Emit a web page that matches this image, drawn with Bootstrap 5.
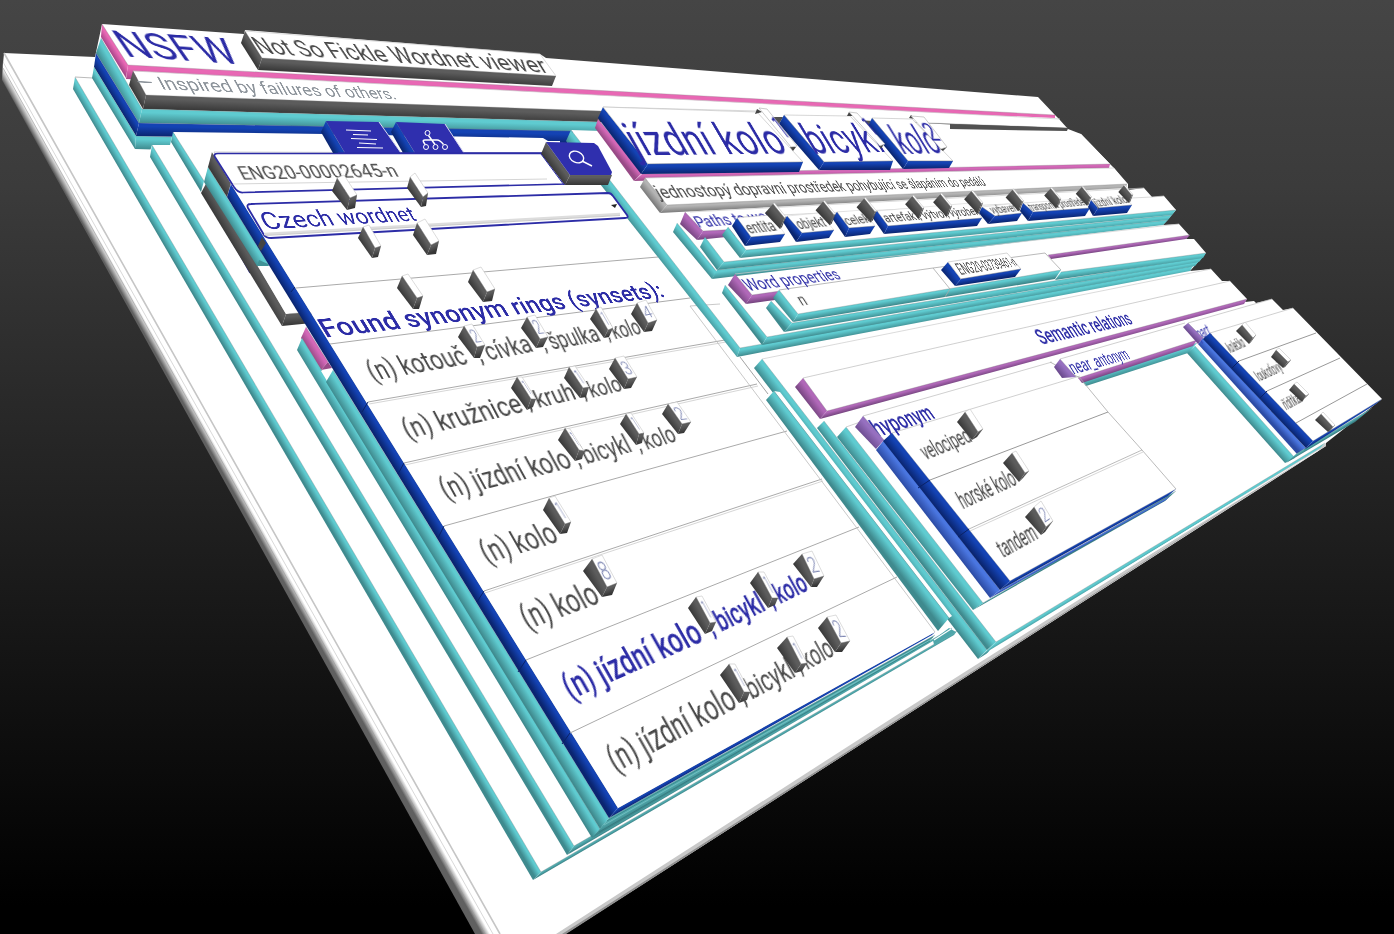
<!DOCTYPE html>
<html lang="cs">
<head>
<meta charset="utf-8">
<meta name="viewport" content="width=device-width, initial-scale=1">
<title>NSFW – Not So Fickle Wordnet viewer</title>
<link href="https://cdn.jsdelivr.net/npm/bootstrap@5.3.0/dist/css/bootstrap.min.css" rel="stylesheet">
<style>
  body { background: #000; font-family: Roboto, "Noto Sans", sans-serif; }
  .scene { width: 1394px; height: 934px; background: linear-gradient(#454545 0%, #3b3b3b 20%, #202020 55%, #000 97%); }
  .scene svg { left: 0; top: 0; width: 1394px; height: 934px; }
  .label3d { left: 0; top: 0; line-height: 1; white-space: pre; transform-origin: 0 0; color: #484848; font-weight: 400; }
  .ink { color: #2c2ca6; font-weight: 400; }
  .ink-bold { color: #2c2ca6; font-weight: 500; }
  .ink-thin { color: #2c2ca6; font-weight: 400; }
  .muted-ink { color: #8d949b; }
  .digit { color: #8089b4; font-weight: 300; }
</style>
</head>
<body class="m-0 overflow-hidden">
<main class="scene position-relative overflow-hidden" id="scene"></main>
<script src="https://cdn.jsdelivr.net/npm/bootstrap@5.3.0/dist/js/bootstrap.bundle.min.js"></script>
<script>
const scene = document.getElementById('scene');
const NS = 'http://www.w3.org/2000/svg';
// wall shades: lit upper rim, shadowed foot
const shade = {
  teal: ['#5fcbd0', '#3f8a8e'], deep: ['#53aeb2', '#3a8084'], blue: ['#1443b4', '#0a2570'], dark: ['#5c5c5c', '#363636'],
  pink: ['#e868b4', '#a9468a'], rose: ['#d468b8', '#984a86'], purple: ['#b068b8', '#74447e'],
  violet: ['#9670c0', '#6d4c90'], grey: ['#b4b4b4', '#7c7c7c'], sky: ['#4a76e0', '#2c4ba4'],
  page: ['#ffffff', '#606060']
};
let markup = '', ids = 0;
function poly(fill, pts, extra = '') { markup += `<polygon fill="${fill}" points="${pts}" ${extra}/>`; }
function line(pts, color = '#bbb', w = 1) { markup += `<polyline points="${pts}" fill="none" stroke="${color}" stroke-width="${w}"/>`; }
// a,b = upper rim; c,d = foot
function wall(kind, ax, ay, bx, by, cx, cy, dx, dy) {
  const [l, d] = shade[kind], ex = bx - ax, ey = by - ay, n = ex * ex + ey * ey || 1;
  const k = ((dx - ax) * -ey + (dy - ay) * ex) / n, id = 'g' + (++ids);
  markup += `<linearGradient id="${id}" gradientUnits="userSpaceOnUse" x1="${ax}" y1="${ay}" x2="${ax - ey * k}" y2="${ay + ex * k}"><stop offset=".25" stop-color="${l}"/><stop offset="1" stop-color="${d}"/></linearGradient>`;
  poly(`url(#${id})`, [ax, ay, bx, by, cx, cy, dx, dy].join(' '));
  line(`${ax},${ay} ${bx},${by}`, 'rgba(130,130,130,.45)', .7);
}
function flush() {
  const s = document.createElementNS(NS, 'svg');
  s.setAttribute('class', 'position-absolute');
  s.setAttribute('viewBox', '0 0 1394 934');
  s.innerHTML = markup; scene.appendChild(s); markup = '';
}
function solve(A, b) {
  for (let i = 0; i < 8; i++) {
    let p = i; for (let r = i; r < 8; r++) if (Math.abs(A[r][i]) > Math.abs(A[p][i])) p = r;
    [A[i], A[p]] = [A[p], A[i]]; [b[i], b[p]] = [b[p], b[i]];
    for (let r = 0; r < 8; r++) if (r !== i) {
      const f = A[r][i] / A[i][i];
      for (let c = i; c < 8; c++) A[r][c] -= f * A[i][c];
      b[r] -= f * b[i];
    }
  }
  return b.map((v, i) => v / A[i][i]);
}
// baseline start/end and the vectors from the baseline up to the cap height
function text(str, cls, x0, y0, x1, y1, ux, uy, vx = ux, vy = uy) {
  const e = document.createElement('div'), f = Math.max(12, Math.round(-uy / .711 * 1.15));
  e.className = 'label3d position-absolute ' + cls; e.textContent = str; e.style.fontSize = f + 'px';
  scene.appendChild(e);
  const w = e.getBoundingClientRect().width, base = f * .841, cap = f * .13;
  const src = [[0, cap], [w, cap], [w, base], [0, base]];
  const dst = [[x0 + ux, y0 + uy], [x1 + vx, y1 + vy], [x1, y1], [x0, y0]], A = [], b = [];
  src.forEach(([x, y], i) => {
    const [X, Y] = dst[i];
    A.push([x, y, 1, 0, 0, 0, -x * X, -y * X]); b.push(X);
    A.push([0, 0, 0, x, y, 1, -x * Y, -y * Y]); b.push(Y);
  });
  const h = solve(A, b);
  e.style.transform = `matrix3d(${[h[0], h[3], 0, h[6], h[1], h[4], 0, h[7], 0, 0, 1, 0, h[2], h[5], 0, 1].map(v => v.toFixed(9)).join()})`;
}
// sup block: top, left, bottom, inner corner, right corner, right foot
const digits = [];
function cube(n, tx, ty, lx, ly, bx, by, ix, iy, rx, ry, fx, fy) {
  const qx = rx + tx - ix, qy = ry + ty - iy;
  poly('#fff', [tx, ty, qx, qy, rx, ry, ix, iy].join(' '), 'stroke="#c4c4c4" stroke-width=".6"');
  wall('dark', tx, ty, ix, iy, bx, by, lx, ly);
  wall('dark', ix, iy, rx, ry, fx, fy, bx, by);
  if (n) digits.push([n, tx + (ix - tx) * .78 + 1, ty + (iy - ty) * .78, tx + (rx - tx) * .86, ty + (ry - ty) * .82, (tx - ix) * .6, (ty - iy) * .6]);
}

/* ---- page plane and stepped right silhouette ---- */
poly('#fff', '4,53 95,57 102,24 244,34 245,30 540,54 546,58 660,67 900,86 1038,97 1055,115 1059,119 1068,129 1081,134 1110,164 1114,168 1128,184 1128,190 1144,188 1152,197 1164,196 1176,210 1163,225 1179,224 1189,235 1186,239 1194,239 1206,253 1190,271 1211,269 1222,281 1230,281 1247,299 1245,302 1254,301 1256,303 1272,299 1283,310 1293,308 1382,399 1326,443 1326,446 565,934 500,934');
poly('#fff', '4,53 500,934 488,934 3,64');
wall('page', 3, 62, 493, 934, 475, 934, 2, 80);
line('4,53 500,934', '#c6c6c6', 1.6); line('3,68 485,934', '#999', .6);
poly('#c9c9c9', '1326,443 1326,446 565,934 556,934 900,713');
poly('#8f8f8f', '1326,445 566,934 562,934');
/* main container */
wall('teal', 75, 77, 541, 872, 533, 880, 73, 89);
wall('deep', 541, 872, 957, 631, 954, 635, 533, 880);
line('75,77 93,78');
/* header stack */
wall('pink', 102, 24, 128, 65, 126, 78, 101, 37);
wall('teal', 101, 38, 142, 109, 139, 123, 96, 53);
wall('blue', 96, 53, 139, 123, 136, 136, 94, 67);
wall('teal', 94, 67, 136, 136, 135, 149, 92, 78);
wall('teal', 136, 136, 173, 137, 170, 150, 135, 149);
poly('#fff', '173,132 170,145 152,145 150,151 200,200 200,140');
wall('pink', 128, 65, 1055, 115, 1055, 118, 126, 79);
poly('#fff', '133,71 1057,119 1066,129 146,95');
line('133,71 1060,119', '#ccc', .7);
wall('dark', 133, 71, 146, 95, 143, 109, 129, 85);
wall('dark', 146, 95, 600, 111, 600, 122, 143, 109);
wall('dark', 600, 111, 1068, 128, 1067, 130, 600, 122);
wall('teal', 142, 109, 600, 122, 598, 132, 139, 123);
wall('blue', 139, 123, 574, 131, 567, 143, 136, 136);
poly('#fff', '173,132 325,134 543,138 548,141 560,141 560,180 200,180');
wall('dark', 245, 31, 262, 58, 258, 70, 241, 43);
wall('dark', 262, 58, 556, 76, 552, 86, 258, 70);
line('245,31 540,54 556,76', '#ccc', .7);
/* left column containers */
wall('teal', 152, 145, 574, 846, 567, 855, 150, 157);
wall('deep', 574, 846, 952, 628, 950, 631, 567, 855);
wall('teal', 173, 132, 204, 181, 201, 192, 171, 142);
line('205,195 236,248', '#2c2ca6', 1.6);
line('236,248 250,273', '#2c2ca6', 1.2);
wall('dark', 208, 180, 286, 314, 282, 326, 201, 193);
wall('dark', 286, 314, 312, 312, 312, 323, 282, 326);
poly('#fff', '257,265 270,266 300,310 286,314');
wall('teal', 208, 167, 269, 265, 257, 266, 204, 182);
poly('#419397', '257,266 259,260 268,264 269,266');
wall('dark', 212, 152, 231, 183, 227, 197, 208, 167);
wall('rose', 306, 327, 328, 362, 321, 370, 301, 338);
poly('#9a4a88', '328,362 332,368 321,370');
wall('teal', 302, 338, 600, 829, 592, 838, 297, 350);
poly('#fff', '321,371 331,369 327,381');
wall('teal', 333, 370, 609, 818, 600, 829, 326, 382);
/* lower edges of the result list */
wall('deep', 609, 818, 935, 635, 928, 643, 592, 838);
line('604,825 932,639', '#8cc', .6); line('599,832 930,641', '#2f6f73', .6); line('607,821 933,637', '#2f6f73', .6);
wall('blue', 618, 808, 935, 632, 932, 635, 609, 818);
wall('blue', 231, 184, 618, 808, 609, 818, 227, 197);
poly('#fff', '212,152 543,153 640,262 690,306 935,632 618,808 231,184');
poly('#444', '262,237 266,243 261,251 258,246');
for (const p of ['291,292 295,287', '362,412 368,402', '398,474 404,463', '438,538 444,526', '477,602 484,591', '518,672 526,660', '562,744 570,733']) line(p, '#0a2266', 1);
/* list separators */
[[296,288,658,257],[330,344,690,298],[368,402,725,340],[404,463,757,384],[444,526,787,431],[484,591,822,479],[526,660,859,527],[570,733,897,577]]
  .forEach(([a, b, c, d], i) => { line(`${a},${b} ${c},${d}`, '#aaa'); if ([2, 3, 5].includes(i)) line(`${a + 1},${b + 2} ${c + 1},${d + 2}`, '#ccc', .8); });
line('720,304 690,306 935,632', '#bbb', .8); line('740,357 768,394', '#999', .9);

/* right column container */
poly('#fff', '571,130 602,131 645,180 660,213 690,260 665,250');
wall('teal', 571, 130, 740, 348, 737, 357, 566, 141);

/* entry fields */
poly('#fff', '214,152 545,153 565,184 240,192', 'stroke="#cfcfcf" stroke-width="1"');
markup += '<path d="M218 153.5H543L565 184L243 192.500Q238 193 234 187L215 157Q213 153.500 218 153.500Z" fill="#fff" stroke="#2c2ca6" stroke-width="1.7"/>';
markup += '<path d="M251 204L608 193Q611 193 613 196L627 215Q629 218 625 218L271 238Q266 238 264 235L248 208Q246 204 251 204Z" fill="#fff" stroke="#2c2ca6" stroke-width="1.8"/>';
line('233,184 547,179', '#d5d5d5'); line('264,234 620,214', '#ddd', 2.5); line('265,235.500 620,215.500', '#aaa', .6);
poly('#222', '611,205 617,204 615,208');

/* toolbar buttons */
wall('blue', 326, 121, 345, 153, 333, 153, 321, 132); poly('#2f2fae', '326,121 379,122 401,153 345,153');
wall('blue', 396, 122, 415, 153, 403, 153, 391, 132); poly('#2f2fae', '396,122 445,124 464,153 415,153');
line('379,122 401,153', '#d8d8ee', 1); line('445,124 464,153', '#d8d8ee', 1);
line('338,153 545,153', '#2c2ca6', 1.5);
markup += '<g stroke="#fff" stroke-width="1" fill="none"><path d="M346 130L371 131M353 134.500L368 135M351 138.500L377 139.500M359 143L376 144M357 147.500L383 148"/>' +
  '<circle cx="427.500" cy="133" r="2.500"/><circle cx="426" cy="147" r="2.500"/><circle cx="435.500" cy="147" r="2.500"/><circle cx="445" cy="147" r="2.500"/><path d="M428.500 135.500L435 144.500M425 144.500L423.500 142Q422.500 140 425 140H437Q440 140 443.500 144.500" stroke-width="1.500"/></g>';
wall('dark', 546, 142, 570, 175, 565, 185, 541, 154);
wall('dark', 570, 175, 612, 175, 608, 185, 565, 185);
line('541,154 564,185', '#2c2ca6', 1);
poly('#2f2fae', '546,142 594,143 598,146 612,172 611,175 570,175');
markup += '<g fill="none" stroke="#fff" stroke-width="1.400"><ellipse cx="576.500" cy="157" rx="7.500" ry="5.500" transform="rotate(25 576.500 157)"/><path d="M582 161L592 166"/></g>';

/* headline */
poly('#fff', '603,107 960,125 1081,134 1110,164 1110,166 640,178 605,130');
line('603,107 757,111', '#ccc', .7);
poly('#515151', '950,124 1068,128 1067,131 950,129');
poly('#515151', '767,117 783,117 779,124 773,123'); poly('#515151', '857,120 871,121 868,127 862,126');
wall('rose', 598, 119, 642, 173, 634, 181, 595, 128);
wall('rose', 642, 174, 1110, 164, 1109, 168, 634, 181);
wall('blue', 603, 107, 648, 164, 641, 174, 598, 118);
poly('#fff', '603,107 757,112 803,162 648,164', 'stroke="#bbb" stroke-width=".6"');
wall('blue', 648, 164, 803, 162, 799, 172, 641, 174);
/* definition */
poly('#fff', '645,178 1114,168 1127,184 667,205'); line('645,178 1114,168', '#ccc', .7);
wall('grey', 645, 178, 667, 205, 660, 213, 640, 187);
wall('grey', 667, 205, 1127, 184, 1126, 188, 660, 213);
/* paths */
line('690,212 1144,188', '#ccc', .7); line('740,217 1152,197 1164,196', '#ccc', .7);
wall('teal', 677, 223, 717, 272, 712, 279, 673, 232);
wall('teal', 717, 270, 1168, 220, 1163, 225, 712, 279);
wall('purple', 685, 212, 703, 231, 697, 240, 680, 224);
wall('purple', 703, 231, 740, 229, 736, 236, 697, 240);
wall('teal', 705, 237, 724, 262, 717, 270, 700, 247);
wall('teal', 724, 262, 1172, 215, 1168, 220, 717, 270);
poly('#fff', '728,227 1160,200 1176,210 746,250');
wall('teal', 728, 227, 746, 250, 740, 258, 722, 235);
wall('teal', 746, 250, 1176, 210, 1172, 215, 740, 258);
/* word properties */
wall('teal', 740, 348, 1193, 266, 1190, 271, 737, 357);
wall('teal', 725, 285, 767, 337, 762, 345, 722, 293);
wall('teal', 767, 337, 1199, 261, 1195, 266, 762, 345);
line('735,274 1179,224', '#ccc', .7);
wall('purple', 735, 274, 752, 295, 746, 304, 728, 285);
wall('purple', 752, 295, 780, 291, 775, 300, 746, 304);
wall('purple', 1048, 255, 1190, 235, 1186, 239, 1051, 259);
wall('teal', 771, 301, 792, 323, 784, 332, 766, 308);
wall('teal', 792, 323, 1203, 257, 1199, 262, 784, 332);
poly('#fff', '779,290 1045,253 1061,270 798,314');
wall('teal', 779, 290, 798, 314, 793, 322, 773, 298);
wall('teal', 798, 314, 1061, 270, 1055, 279, 793, 322);
wall('teal', 1061, 272, 1206, 253, 1203, 258, 1055, 280);
line('779,290 933,268 950,289 945,297', '#a8a8a8', .8); line('933,268 1045,253 1061,270', '#a8a8a8', .8);
wall('blue', 948, 262, 961, 279, 955, 286, 941, 270);
poly('#fff', '948,262 1007,253 1021,269 961,279', 'stroke="#bbb" stroke-width=".6"');
wall('blue', 961, 279, 1021, 269, 1015, 277, 955, 286);

/* semantic relations */
line('762,359 1211,269', '#ccc', .7);
wall('teal', 762, 359, 987, 650, 978, 659, 754, 368);
wall('teal', 824, 421, 996, 642, 987, 650, 817, 428);
wall('teal', 996, 642, 1325, 443, 1320, 448, 978, 659);
poly('#fff', '990,650 1320,449 1318,451 984,657');
poly('#fff', '834,421 850,440 985,620 973,610 837,437');
poly('#fff', '774,391 780,392 952,616 949,618');
wall('teal', 774, 391, 949, 618, 938, 631, 766, 400);
poly('#4fa6aa', '949,628 933,640 934,645 956,632'); line('934,640 951,629', '#fff', 1.2);
wall('teal', 846, 427, 983, 603, 973, 610, 837, 437);
wall('deep', 983, 603, 1176, 491, 1165, 501, 973, 610);
line('803,378 1230,281', '#bbb', .7);
wall('purple', 803, 378, 827, 411, 820, 419, 795, 387);
wall('purple', 827, 411, 1247, 299, 1244, 304, 820, 419);
line('846,427 863,421', '#bbb', .7); line('863,416 1052,362', '#bbb', .7); line('892,433 1080,376', '#bbb', .7);
/* near_antonym panel */
wall('teal', 1195, 346, 1295, 458, 1285, 463, 1187, 353);
wall('teal', 1080, 379, 1197, 343, 1188, 353, 1086, 386);
wall('purple', 1078, 378, 1197, 340, 1193, 346, 1082, 383);
line('1060,359 1185,323', '#bbb', .7); line('1188,323 1272,299', '#bbb', .7);
/* part panel */
wall('sky', 1203, 338, 1306, 448, 1297, 454, 1198, 344);
wall('deep', 1296, 454, 1372, 408, 1355, 422, 1286, 463);
wall('blue', 1313, 441, 1382, 399, 1376, 404, 1304, 450);
line('1210,333 1293,308', '#bbb', .7); line('1239,361 1316,333', '#999'); line('1267,391 1340,358', '#999'); line('1296,423 1367,384', '#999');
/* hyponym panel */
wall('sky', 884, 440, 1000, 590, 990, 598, 876, 450);
wall('sky', 1000, 590, 1170, 496, 1166, 500, 990, 598);
wall('blue', 1010, 581, 1176, 489, 1168, 496, 1000, 590);
line('1050,362 1080,378 1108,412 1142,450 1176,489', '#aaa', .8);
line('930,480 1108,412', '#999'); line('969,529 1142,450', '#aaa', .8); line('970,531 1143,452', '#ccc', .8);
flush();

text('NSFW', 'ink', 127, 57, 243, 65, -18, -26);
text('Not So Fickle Wordnet viewer', '', 260, 53, 550, 73, -11, -16, -10, -16);
text('— Inspired by failures of others.', 'muted-ink', 140, 89, 398, 100, -7, -13, -6, -11);
text('ENG20-00002645-n', '', 243, 180, 400, 177, -7, -13);
text('Czech wordnet', 'ink-thin', 266, 230, 418, 221, -9, -17, -8, -14);
text('Found synonym rings (synsets):', 'ink-bold', 326, 338, 666, 297, -11, -18, -9, -15);
[
  ['(n) kotouč', 373, 381, 470, 364, -10, -18], [', cívka', 481, 363, 535, 352, -9, -17], [', špulka', 545, 351, 602, 341, -8, -16], [', kolo', 609, 341, 643, 334, -7, -15],
  ['(n) kružnice', 408, 439, 525, 412, -10, -19], [', kruh', 530, 411, 578, 400, -8, -17], [', kolo', 585, 400, 624, 391, -7, -15],
  ['(n) jízdní kolo', 446, 499, 574, 467, -11, -20], [', bicykl', 579, 467, 634, 452, -9, -17], [', kolo', 640, 452, 678, 441, -8, -16],
  ['(n) kolo', 487, 563, 560, 541, -12, -21], ['(n) kolo', 528, 630, 602, 603, -12, -22],
  ['(n) jízdní kolo', 616, 773, 739, 707, -13, -23], [', bicykl', 744, 704, 797, 676, -11, -20], [', kolo', 801, 674, 836, 655, -10, -18],
].forEach(([s, ...r]) => text(s, '', ...r));
text('(n) jízdní kolo', 'ink-bold', 571, 700, 705, 641, -13, -23);
text(', bicykl', 'ink-bold', 713, 636, 767, 610, -11, -20);
text(', kolo', 'ink-bold', 773, 608, 810, 590, -10, -18);
text('jízdní kolo', 'ink-thin', 637, 156, 790, 154, -18, -32, -18, -30);
text('jednostopý dopravní prostředek pohybující se šlapáním do pedálů', '', 660, 199, 987, 186, -8, -13, -6, -9);
text('Paths to word', 'ink-thin', 699, 228, 782, 221, -7, -11);
text('Word properties', 'ink-thin', 749, 291, 842, 279, -9, -12, -8, -11);
text('n', '', 802, 306, 809, 305, -7, -11);
text('ENG20-03739461-n', '', 961, 275, 1018, 266, -7, -11, -6, -9);
text('Semantic relations', 'ink-bold', 1042, 345, 1134, 324, -9, -14, -8, -12);
text('hyponym', 'ink-bold', 878, 437, 936, 418, -11, -16, -10, -14);
text('near_antonym', 'ink', 1074, 375, 1131, 359, -8, -13, -7, -11);
text('part', 'ink', 1200, 340, 1212, 335, -6, -11);
text('velociped', '', 926, 460, 973, 441, -9, -15);
text('horské kolo', '', 963, 509, 1018, 484, -9, -16);
text('tandem', '', 1003, 558, 1039, 538, -9, -16);
text('kolečko', '', 1231, 354, 1247, 347, -6, -10);
text('loukoťový', '', 1260, 382, 1284, 371, -7, -10);
text('řídítka', '', 1287, 411, 1302, 403, -6, -10);

/* upper blocks that overlap the labels */
wall('violet', 863, 416, 884, 440, 876, 449, 855, 427);
wall('violet', 1060, 359, 1076, 377, 1062, 378, 1054, 367);
wall('violet', 1188, 323, 1203, 338, 1198, 344, 1183, 327);
wall('blue', 892, 433, 1010, 581, 1000, 590, 883, 441);
line('918,488 930,480', '#0a2266'); line('958,537 969,529', '#0a2266');
wall('blue', 1210, 333, 1313, 441, 1306, 448, 1203, 339);
line('1232,368 1239,361', '#0a2266'); line('1260,398 1267,391', '#0a2266');
poly('#fff', '784,115 850,116 893,161 824,162', 'stroke="#bbb" stroke-width=".6"');
wall('blue', 784, 115, 824, 162, 819, 170, 779, 124);
wall('blue', 824, 162, 893, 161, 890, 170, 819, 170);
poly('#fff', '872,118 912,119 953,161 908,161', 'stroke="#bbb" stroke-width=".6"');
wall('blue', 872, 118, 908, 161, 903, 169, 868, 126);
wall('blue', 908, 161, 953, 161, 949, 168, 903, 169);
[[737,218,751,237,785,234,745,246,732,226],[787,216,802,233,834,230,796,242,783,222],[837,212,849,228,875,226,845,237,832,218],
 [877,211,888,226,982,218,884,234,872,217],[982,207,995,216,1022,213,988,224,979,213],[1023,203,1033,212,1090,208,1028,221,1020,211],[1091,200,1098,208,1132,205,1093,216,1088,207]]
.forEach(([tx, ty, ix, iy, rx, ry, bx, by, lx, ly]) => {
  poly('#fff', [tx, ty, rx + tx - ix, ry + ty - iy, rx, ry, ix, iy].join(' '), 'stroke="#ccc" stroke-width=".5"');
  wall('blue', tx, ty, ix, iy, bx, by, lx, ly);
  wall('blue', ix, iy, rx, ry, rx - 5, ry + 8, bx, by);
});
flush();
text('bicykl', 'ink-thin', 814, 154, 887, 152, -18, -30, -17, -28);
text('kolo', 'ink-thin', 903, 154, 944, 153, -17, -28);
text('entita', '', 750, 234, 778, 231, -7, -11);
text('objekt', '', 800, 230, 828, 227, -6, -10);
text('celek', '', 848, 226, 872, 223, -6, -9);
text('artefakt, výtvor, výrobek', '', 887, 223, 981, 215, -6, -9, -5, -8);
text('vybavení', '', 993, 214, 1021, 211, -5, -8);
text('transportní prostředek', '', 1032, 211, 1089, 205, -5, -7);
text('jízdní kolo', '', 1097, 207, 1129, 203, -5, -7);

/* sense number blocks */
poly('#444', '757,109 762,112 755,114'); poly('#444', '790,147 796,147 793,151');
poly('#fff', '759,108 767,109 797,146 791,147', 'stroke="#aaa" stroke-width=".6"');
poly('#444', '849,112 853,116 847,116'); poly('#444', '879,145 884,144 881,149');
poly('#fff', '849,112 857,113 885,144 880,146', 'stroke="#aaa" stroke-width=".6"');
poly('#444', '911,115 915,119 909,118'); poly('#444', '940,149 947,147 943,151');
poly('#fff', '911,116 924,117 947,147 941,149', 'stroke="#aaa" stroke-width=".6"');
[[776,216,1],[826,213,.95],[867,210,.95],[915,207,.9],[943,205,.9],[974,202,.9],[1015,200,.85],[1053,198,.8],[1084,196,.75],[1126,194,.7]].forEach(([x, y, k]) =>
  cube('', x - 3 * k, y - 12 * k, x - 11 * k, y - 3 * k, x + 4 * k, y + 13 * k, x + 8.5 * k, y + 2 * k, x + 10 * k, y + 1 * k, x + 6 * k, y + 11 * k));
[['',337,178,332,191,347,210,350,198,357,195,355,208],['',410,177,407,188,421,207,423,197,428,193,426,206],
['',363,227,358,238,372,258,375,248,381,246,378,257],['',417,223,413,235,427,255,431,245,439,241,436,254],
['',402,276,397,288,413,309,417,298,423,296,419,309],['',473,270,468,282,483,302,487,292,495,289,492,301],
['2',464,326,458,337,474,358,477,347,485,345,480,358],['2',527,317,521,328,536,348,540,339,548,337,543,347],
['1',596,309,590,319,604,338,608,330,613,328,609,337],['4',637,303,631,314,644,332,648,323,657,320,652,331],
['1',517,377,511,388,527,410,531,399,536,399,533,407],['1',569,367,564,378,580,398,583,388,589,387,586,397],
['3',615,358,609,369,624,389,628,379,637,377,631,388],['1',565,428,558,440,575,461,579,450,584,451,582,459],
['1',626,414,620,424,636,445,639,434,644,433,642,443],['2',668,404,662,414,678,434,682,424,691,422,684,433],
['1',549,498,543,510,560,534,565,524,571,522,567,533],['8',592,559,583,571,602,597,607,587,617,583,612,595],
['1',696,597,688,608,705,634,710,623,716,622,712,631],['1',758,572,750,583,768,608,772,598,778,598,775,605],
['2',802,554,793,564,811,587,814,579,824,576,817,587],['1',729,664,720,675,739,703,744,692,750,692,747,700],
['1',787,637,777,648,795,673,801,664,807,663,802,671],['2',827,617,818,628,835,652,841,643,850,641,842,652],
['',965,412,957,422,972,440,978,432,983,429,977,437],['',1012,453,1003,463,1019,482,1025,473,1029,471,1023,478],
['2',1034,507,1025,517,1041,535,1046,527,1053,521,1045,532],['',1242,325,1236,331,1249,344,1253,338,1256,335,1251,342],
['',1276,350,1271,357,1283,368,1288,362,1291,360,1285,367],['',1294,384,1289,390,1302,402,1306,396,1309,394,1303,400],
['',1321,414,1315,420,1328,432,1333,427,1335,425,1330,431]].forEach(c => cube(...c));
flush();
digits.forEach(([s, ...r]) => text(s, 'digit', ...r));
text('1', 'ink-thin', 784, 137, 791, 137, -16, -21);
text('1', 'ink-thin', 873, 135, 880, 135, -14, -17);
text('2', 'ink-thin', 932, 141, 942, 141, -13, -18);
</script>
</body>
</html>
